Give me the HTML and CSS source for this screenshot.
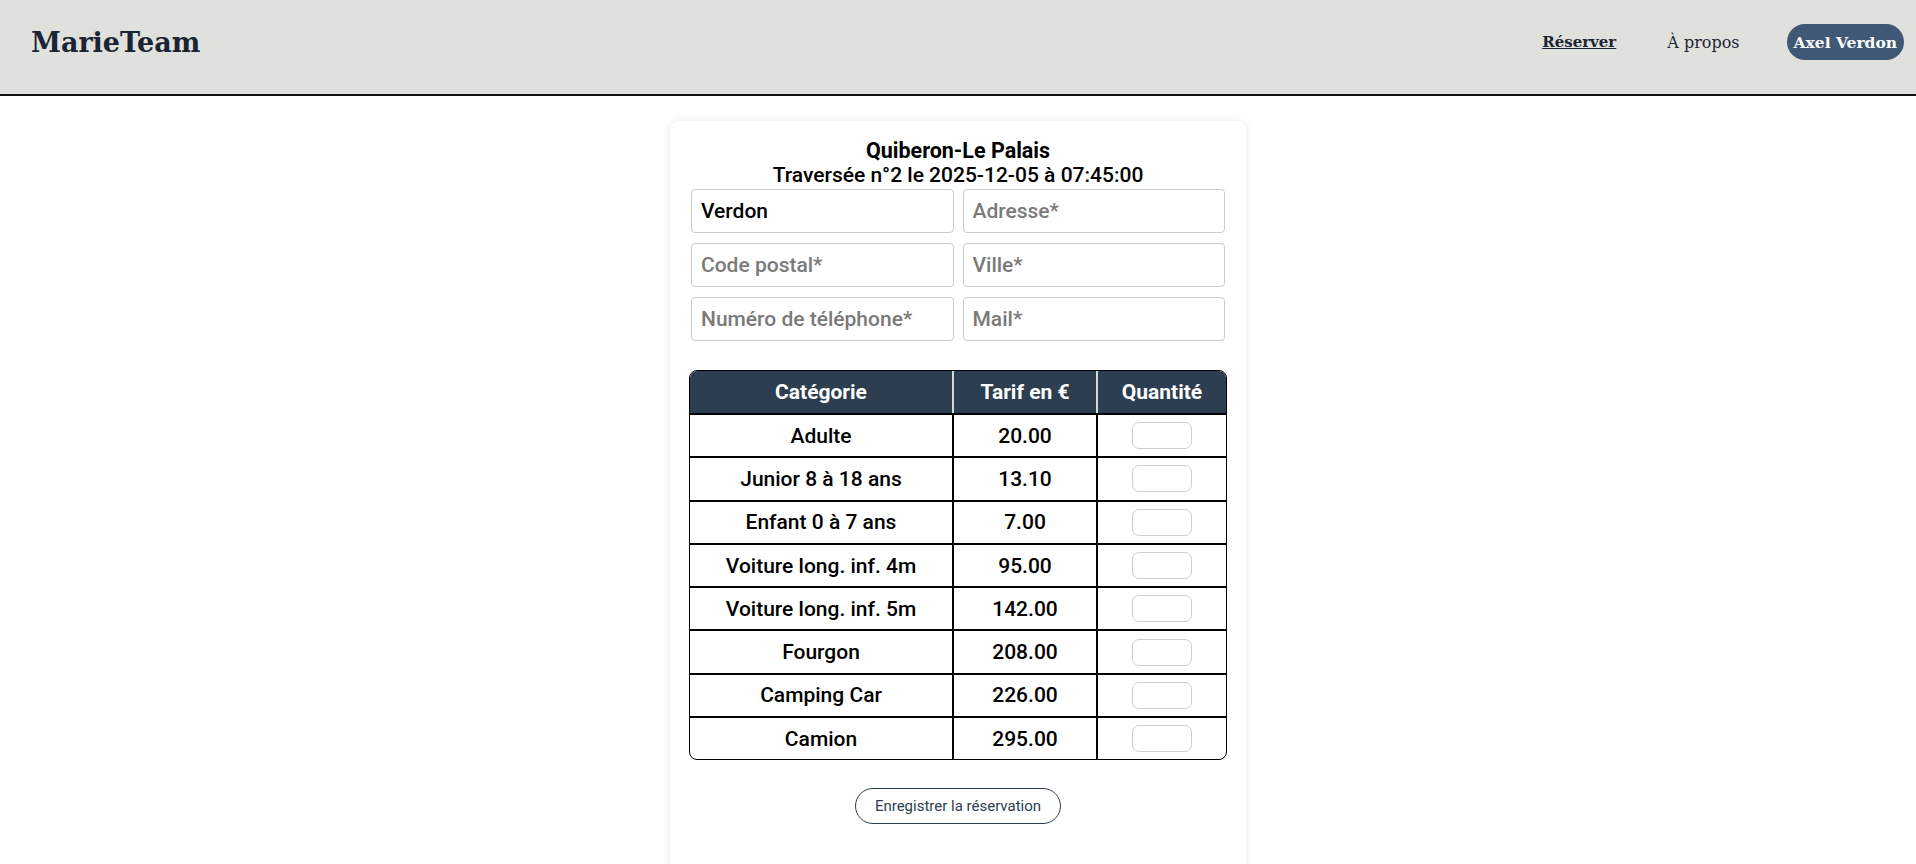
FILE: index.html
```html
<!DOCTYPE html>
<html lang="fr">
<head>
<meta charset="utf-8">
<title>MarieTeam - Réserver</title>
<link rel="stylesheet" href="styles.css">
</head>
<body>
<header class="topbar">
  <div class="brand">MarieTeam</div>
  <nav class="nav">
    <a class="nav-link active" href="#">Réserver</a>
    <a class="nav-link" href="#">À propos</a>
    <span class="user-pill">Axel Verdon</span>
  </nav>
</header>
<main class="page">
  <section class="card">
    <h1 class="title">Quiberon-Le Palais</h1>
    <p class="subtitle">Traversée n°2 le 2025-12-05 à 07:45:00</p>
    <div class="fields">
      <input class="field" type="text" value="Verdon">
      <input class="field" type="text" placeholder="Adresse*">
      <input class="field" type="text" placeholder="Code postal*">
      <input class="field" type="text" placeholder="Ville*">
      <input class="field" type="text" placeholder="Numéro de téléphone*">
      <input class="field" type="text" placeholder="Mail*">
    </div>
    <table class="tarifs">
      <thead>
        <tr><th class="c-cat">Catégorie</th><th class="c-tar">Tarif en €</th><th class="c-qte">Quantité</th></tr>
      </thead>
      <tbody>
        <tr><td>Adulte</td><td>20.00</td><td><input class="qty" type="text"></td></tr>
        <tr><td>Junior 8 à 18 ans</td><td>13.10</td><td><input class="qty" type="text"></td></tr>
        <tr><td>Enfant 0 à 7 ans</td><td>7.00</td><td><input class="qty" type="text"></td></tr>
        <tr><td>Voiture long. inf. 4m</td><td>95.00</td><td><input class="qty" type="text"></td></tr>
        <tr><td>Voiture long. inf. 5m</td><td>142.00</td><td><input class="qty" type="text"></td></tr>
        <tr><td>Fourgon</td><td>208.00</td><td><input class="qty" type="text"></td></tr>
        <tr><td>Camping Car</td><td>226.00</td><td><input class="qty" type="text"></td></tr>
        <tr><td>Camion</td><td>295.00</td><td><input class="qty" type="text"></td></tr>
      </tbody>
    </table>
    <div class="actions">
      <button class="save" type="button">Enregistrer la réservation</button>
    </div>
  </section>
</main>
</body>
</html>
```

FILE: styles.css
```css
* { box-sizing: border-box; }
html, body { margin: 0; padding: 0; background: #ffffff; }
body { font-family: Roboto, "DejaVu Sans", sans-serif; color: #000; }

.topbar {
  height: 96px;
  background: #e0e0dc;
  border-bottom: 2px solid #111;
  display: flex;
  align-items: center;
  justify-content: space-between;
  padding: 0 12px 10px 31px;
}
.brand {
  font-family: "DejaVu Serif", serif;
  font-weight: bold;
  font-size: 27px;
  color: #1b2434;
}
.nav { display: flex; align-items: center; }
.nav-link {
  font-family: "DejaVu Serif", serif;
  font-size: 16px;
  color: #1b2434;
  text-decoration: none;
  margin-right: 47px;
}
.nav-link.active {
  font-size: 15px;
  font-weight: bold;
  text-decoration: underline;
  margin-right: 51px;
}
.user-pill {
  font-family: "DejaVu Serif", serif;
  font-weight: bold;
  font-size: 15.5px;
  color: #fff;
  background: #3f5875;
  border-radius: 18px;
  padding: 0 7px;
  height: 36px;
  display: inline-flex;
  align-items: center;
}

.page { display: flex; justify-content: center; padding-top: 25px; }
.card {
  width: 576px;
  background: #fff;
  border-radius: 9px;
  box-shadow: 0 0 10px rgba(0,0,0,0.09);
  padding: 17px 19px 60px 19px;
}
.title {
  margin: 0;
  text-align: center;
  font-size: 21.5px;
  font-weight: bold;
  line-height: 25px;
}
.subtitle {
  margin: 0;
  text-align: center;
  font-size: 21px;
  font-weight: 500;
  line-height: 25px;
}
.fields {
  display: grid;
  grid-template-columns: repeat(2, minmax(0, 1fr));
  gap: 10px 9px;
  margin-top: 1px;
  padding: 0 2px;
}
.field {
  width: 100%;
  height: 44px;
  border: 1px solid #cccccc;
  border-radius: 4px;
  padding: 0 9px;
  font-family: Roboto, sans-serif;
  font-size: 21px;
  color: #000;
  font-weight: 500;
}
.field::placeholder { color: #7a7a7a; font-weight: 500; }

.tarifs {
  width: 100%;
  margin-top: 29px;
  border-collapse: separate;
  border-spacing: 0;
  border: 1px solid #000;
  border-radius: 8px;
  overflow: hidden;
  font-size: 21px;
}
.tarifs th {
  background: #2c3e50;
  color: #fff;
  font-weight: bold;
  height: 42px;
  padding: 0;
  border-right: 2px solid #d8d8d8;
}
.tarifs th:last-child { border-right: none; }
.c-cat { width: 264px; }
.c-tar { width: 144px; }
.tarifs td {
  text-align: center;
  height: 43.3px;
  border-top: 2px solid #000;
  border-right: 2px solid #000;
  font-weight: 500;
  padding: 0;
}
.tarifs td:last-child { border-right: none; }
.qty {
  width: 60px;
  height: 27px;
  border: 1px solid #cfcfcf;
  border-radius: 7px;
  display: block;
  margin: 0 auto;
}

.actions { display: flex; justify-content: center; margin-top: 28px; }
.save {
  height: 36px;
  width: 206px;
  border: 1px solid #2c3e50;
  border-radius: 20px;
  background: #fff;
  color: #2c3e50;
  font-family: Roboto, sans-serif;
  font-size: 15px;
  font-weight: 400;
}
```
